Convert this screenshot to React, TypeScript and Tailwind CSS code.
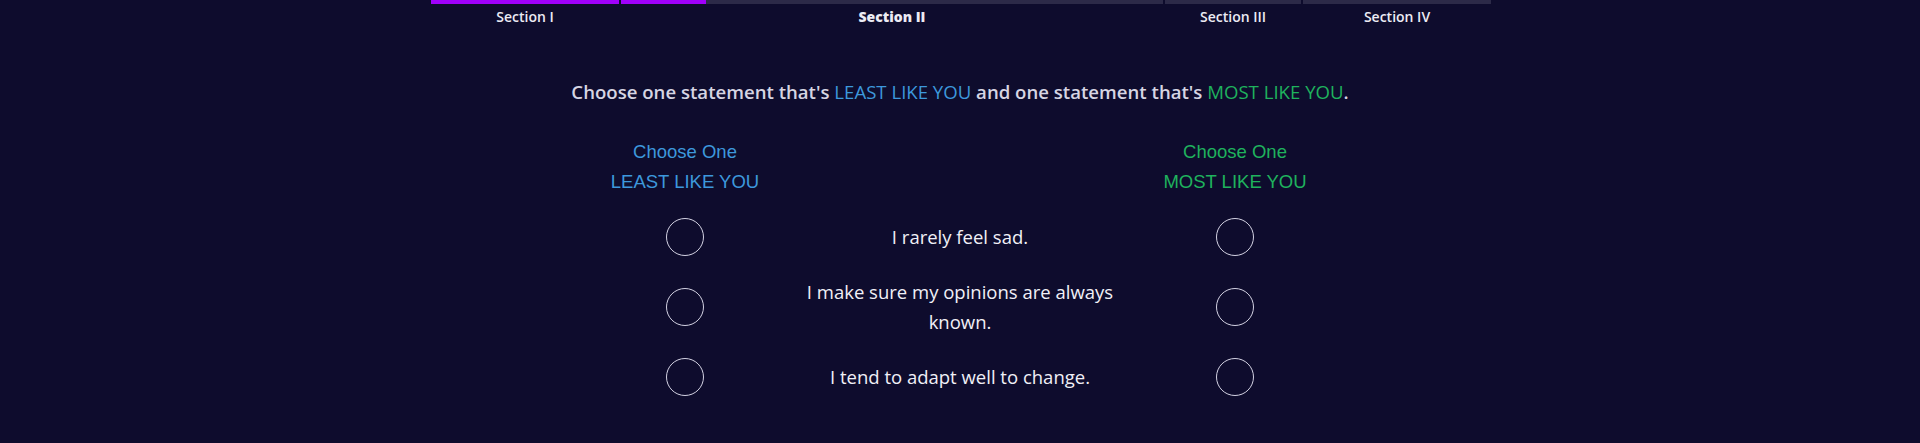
const sections = [
  { label: "Section I", width: "w-[188px]", fill: 100, current: false },
  { label: "Section II", width: "w-[542px]", fill: 15.7, current: true },
  { label: "Section III", width: "w-[136px]", fill: 0, current: false },
  { label: "Section IV", width: "w-[188px]", fill: 0, current: false },
];

const statements = [
  "I rarely feel sad.",
  "I make sure my opinions are always known.",
  "I tend to adapt well to change.",
];

function Radio() {
  return (
    <button
      type="button"
      className="w-[38px] h-[38px] rounded-full border-[1.5px] border-[#d4d3e4] bg-transparent"
    />
  );
}

export default function App() {
  return (
    <div
      className="min-h-screen bg-[#0e0c2d] text-white"
      style={{ fontFamily: "'Open Sans', Lato, sans-serif" }}
    >
      <div className="flex justify-center pl-[2px]">
        <div className="flex gap-[2px]">
          {sections.map((s) => (
            <div key={s.label} className={`${s.width} flex flex-col items-center`}>
              <div className="w-full h-[4px] bg-[#2c2a48]">
                <div className="h-full bg-[#a000fa]" style={{ width: `${s.fill}%` }} />
              </div>
              <span
                className={`mt-[4px] text-[14px] leading-[18px] text-[#ecebf4] ${
                  s.current ? "font-extrabold" : "font-semibold"
                }`}
              >
                {s.label}
              </span>
            </div>
          ))}
        </div>
      </div>

      <div className="w-[780px] mx-auto pt-[51px]">
        <p className="text-center text-[18.6px] leading-[30px] font-semibold text-[#d6d5e3]">
          Choose one statement that's{" "}
          <span className="font-normal text-[#3d98dc]">LEAST LIKE YOU</span> and one statement
          that's <span className="font-normal text-[#1fb25d]">MOST LIKE YOU</span>.
        </p>

        <div className="grid grid-cols-[230px_320px_230px] mt-[30px]">
          <div
            className="text-center text-[18.5px] leading-[30px] text-[#3d98dc]"
            style={{ fontFamily: "'Liberation Sans', Arial, sans-serif" }}
          >
            <div>Choose One</div>
            <div>LEAST LIKE YOU</div>
          </div>
          <div />
          <div
            className="text-center text-[18.5px] leading-[30px] text-[#1fb25d]"
            style={{ fontFamily: "'Liberation Sans', Arial, sans-serif" }}
          >
            <div>Choose One</div>
            <div>MOST LIKE YOU</div>
          </div>
        </div>

        <div className="mt-[5px] flex flex-col">
          {statements.map((text) => (
            <div key={text} className="grid grid-cols-[230px_320px_230px] h-[70px] items-center">
              <div className="flex justify-center">
                <Radio />
              </div>
              <p className="text-center text-[18.5px] leading-[30px] text-[#f1f0f7]">{text}</p>
              <div className="flex justify-center">
                <Radio />
              </div>
            </div>
          ))}
        </div>
      </div>
    </div>
  );
}
